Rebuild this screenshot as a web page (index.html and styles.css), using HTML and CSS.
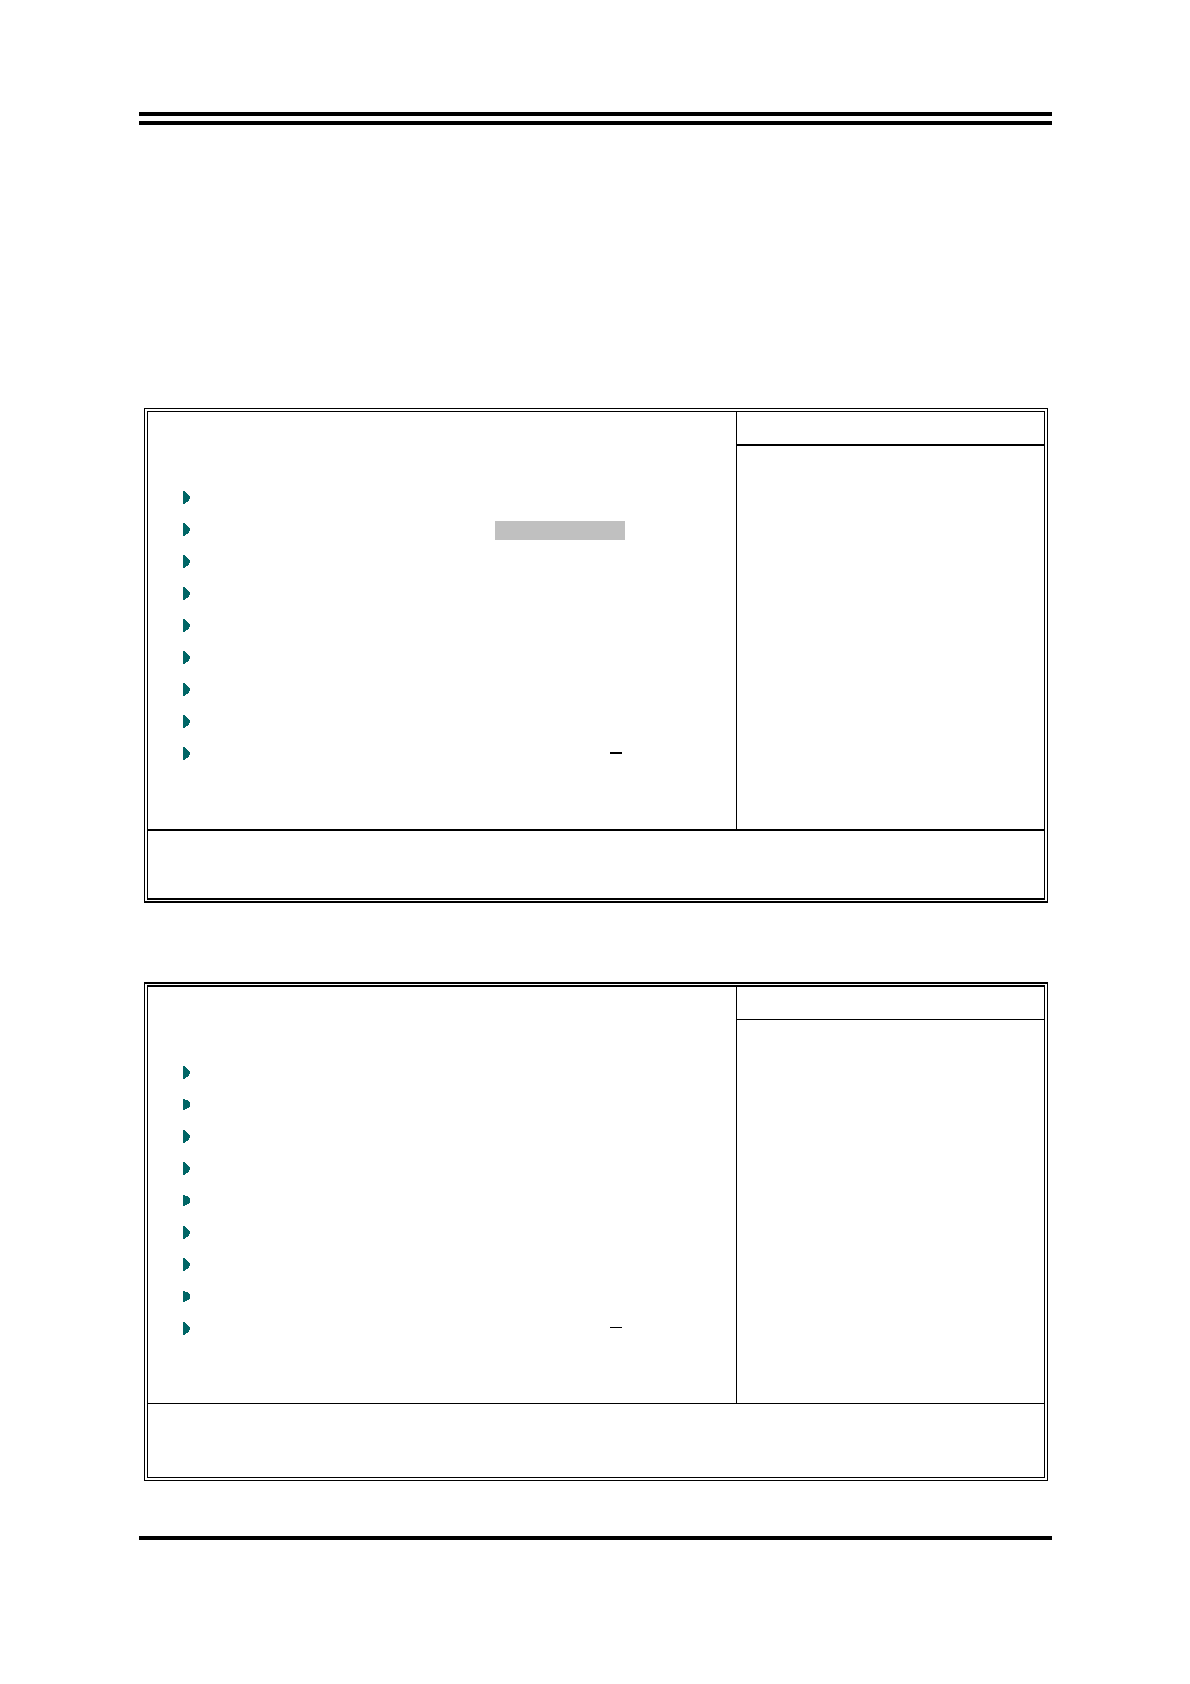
FILE: index.html
```html
<!DOCTYPE html>
<html lang="en">
<head>
    <meta charset="UTF-8">
    <meta name="viewport" content="width=device-width, initial-scale=1.0">
    <title>Setup Menu</title>
    <link rel="stylesheet" href="styles.css">
</head>
<body>

    <!-- Arrow shapes used by the menu rows -->
    <svg class="defs" width="0" height="0" aria-hidden="true">
        <symbol id="arrow" viewBox="0 0 7 13">
            <path d="M0 0H2V1H3V2H4V3H5V4H6V5H7V8H6V10H5V11H3V12H2V13H0z"/>
        </symbol>
        <symbol id="arrow-short" viewBox="0 0 7 13">
            <path d="M0 1H2V2H5V3H6V4H7V9H6V10H4V11H2V12H0z"/>
        </symbol>
    </svg>

    <header class="page-header"></header>

    <main>
        <section class="panel panel-first">
            <div class="screen">
                <ul class="menu">
                    <li><svg class="arrow"><use href="#arrow"/></svg></li>
                    <li><svg class="arrow"><use href="#arrow"/></svg><span class="highlight"></span></li>
                    <li><svg class="arrow"><use href="#arrow"/></svg></li>
                    <li><svg class="arrow"><use href="#arrow"/></svg></li>
                    <li><svg class="arrow"><use href="#arrow"/></svg></li>
                    <li><svg class="arrow"><use href="#arrow"/></svg></li>
                    <li><svg class="arrow"><use href="#arrow"/></svg></li>
                    <li><svg class="arrow"><use href="#arrow"/></svg></li>
                    <li><svg class="arrow"><use href="#arrow"/></svg><span class="dash"></span></li>
                </ul>
                <aside class="help">
                    <div class="help-title"></div>
                </aside>
                <div class="keys"></div>
            </div>
        </section>

        <section class="panel panel-second">
            <div class="screen">
                <ul class="menu">
                    <li><svg class="arrow"><use href="#arrow"/></svg></li>
                    <li><svg class="arrow"><use href="#arrow-short"/></svg></li>
                    <li><svg class="arrow"><use href="#arrow"/></svg></li>
                    <li><svg class="arrow"><use href="#arrow"/></svg></li>
                    <li><svg class="arrow"><use href="#arrow-short"/></svg></li>
                    <li><svg class="arrow"><use href="#arrow"/></svg></li>
                    <li><svg class="arrow"><use href="#arrow"/></svg></li>
                    <li><svg class="arrow"><use href="#arrow-short"/></svg></li>
                    <li><svg class="arrow"><use href="#arrow"/></svg><span class="dash"></span></li>
                </ul>
                <aside class="help">
                    <div class="help-title"></div>
                </aside>
                <div class="keys"></div>
            </div>
        </section>
    </main>

    <footer class="page-footer"></footer>

</body>
</html>
```

FILE: styles.css
```css
:root {
    --line-color: #000000;
    --arrow-color: #006666;
    --highlight-color: #c0c0c0;
}

* {
    box-sizing: border-box;
}

body {
    margin: 0;
    padding: 112px 138px 0 139px;
    background-color: #ffffff;
    font-family: "Liberation Sans", Arial, sans-serif;
}

.defs {
    position: absolute;
}

.page-header {
    height: 13px;
    border-top: 4px solid var(--line-color);
    border-bottom: 4px solid var(--line-color);
    margin-bottom: 283px;
}

.page-footer {
    border-top: 4px solid var(--line-color);
    margin-top: 55px;
}

/* two thin frames, one inside the other */
.panel {
    margin: 0 4px 0 5px;
    padding: 2px;
    border: 1px solid var(--line-color);
}

.screen {
    display: grid;
    grid-template-columns: 588fr 308fr;
    border: 1px solid var(--line-color);
}

.menu {
    list-style: none;
    margin: 0;
    padding: 70px 0 58px 35px;
}

.menu li {
    display: grid;
    grid-template-columns: 312px 130px;
    align-items: start;
    height: 32px;
}

.arrow {
    width: 7px;
    height: 13px;
    margin-top: 9px;
    fill: var(--arrow-color);
}

.highlight {
    height: 19px;
    margin-top: 7px;
    background-color: var(--highlight-color);
}

.dash {
    justify-self: end;
    width: 12px;
    height: 1px;
    margin: 14px 3px 0 0;
    background-color: var(--line-color);
}

.help {
    border-left: 1px solid var(--line-color);
}

.help-title {
    height: 33px;
    border-bottom: 1px solid var(--line-color);
}

.keys {
    grid-column: 1 / -1;
    height: 74px;
    border-top: 1px solid var(--line-color);
}

/* first panel has heavier lines at the bottom */
.panel-first {
    padding-bottom: 1px;
    border-bottom-width: 2px;
    margin-bottom: 79px;
}

.panel-first .screen {
    border-bottom-width: 2px;
}

.panel-first .menu {
    padding-bottom: 59px;
}

.panel-first .help-title {
    height: 34px;
    border-bottom-width: 2px;
}

.panel-first .keys {
    height: 69px;
    border-top-width: 2px;
}

.panel-first .dash {
    height: 2px;
}

/* second panel has them at the top */
.panel-second {
    padding-top: 1px;
    border-top-width: 2px;
}

.panel-second .screen {
    border-top-width: 2px;
}
```
